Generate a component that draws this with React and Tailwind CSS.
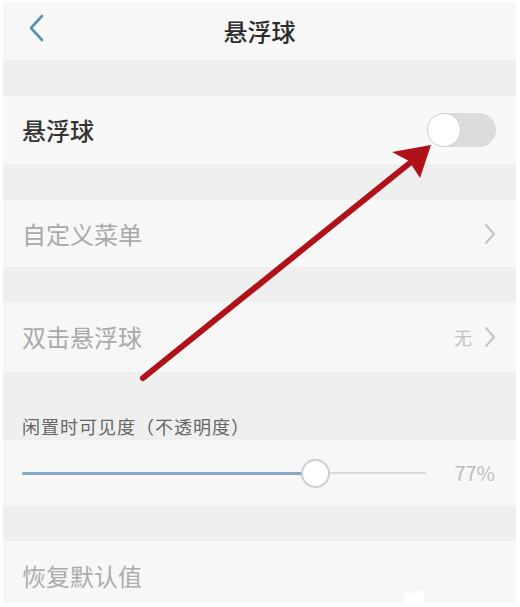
import React from "react";

const font = { fontFamily: '"Noto Sans CJK SC", "Noto Sans", sans-serif' };

function Chevron({ className }) {
  return (
    <svg className={className} width="12" height="22" viewBox="0 0 12 22" fill="none">
      <path d="M2 2 L10 11 L2 20" stroke="#c4c4c4" strokeWidth="2" strokeLinecap="round" strokeLinejoin="round" />
    </svg>
  );
}

export default function App() {
  return (
    <div
      className="relative w-[520px] h-[607px] bg-white pt-[2px] pl-[3px] pr-[4px] overflow-hidden font-['Noto_Sans_CJK_SC',sans-serif]"
      style={font}
    >
      <div className="flex flex-col h-[601px] bg-[#efefef]">
        {/* Header */}
        <div className="relative h-[58px] bg-[#f7f7f7] flex items-center justify-center shrink-0">
          <svg className="absolute left-[23px] top-[11px]" width="20" height="30" viewBox="0 0 20 30" fill="none">
            <path d="M16 3 L5 15 L16 27" stroke="#5f93ab" strokeWidth="2.6" strokeLinecap="round" strokeLinejoin="round" />
          </svg>
          <span className="text-[24px] font-medium text-[#2b2b2b] leading-none">悬浮球</span>
        </div>
        <div className="h-[36px] shrink-0" />
        {/* Row 1 */}
        <div className="h-[68px] bg-[#f8f8f8] flex items-center justify-between pl-[19px] pr-[20px] shrink-0">
          <span className="text-[24px] font-medium text-[#333333] leading-none">悬浮球</span>
          <div className="relative w-[69px] h-[34px] rounded-full bg-[#dcdcdc]">
            <div className="absolute left-0 top-0 w-[34px] h-[34px] rounded-full bg-white border border-[#d2d2d2]" />
          </div>
        </div>
        <div className="h-[36px] shrink-0" />
        {/* Row 2 */}
        <div className="h-[67px] bg-[#f7f7f7] flex items-center justify-between pl-[19px] pr-[20px] shrink-0">
          <span className="text-[24px] text-[#a9a9a9] leading-none">自定义菜单</span>
          <Chevron />
        </div>
        <div className="h-[35px] shrink-0" />
        {/* Row 3 */}
        <div className="h-[70px] bg-[#f7f7f7] flex items-center justify-between pl-[19px] pr-[20px] shrink-0">
          <span className="text-[24px] text-[#a9a9a9] leading-none">双击悬浮球</span>
          <div className="flex items-center gap-[12px]">
            <span className="text-[18px] text-[#c2c2c2] leading-none">无</span>
            <Chevron />
          </div>
        </div>
        {/* Section header */}
        <div className="h-[68px] flex items-end pl-[19px] pb-[5px] shrink-0">
          <span className="text-[18px] text-[#666666] leading-none tracking-[1px]">闲置时可见度（不透明度）</span>
        </div>
        {/* Slider row */}
        <div className="h-[66px] bg-[#f7f7f7] flex items-center pl-[19px] pr-[21px] shrink-0">
          <div className="relative w-[404px] h-[30px] flex items-center">
            <div className="absolute left-0 w-[280px] h-[3px] bg-[#86a8c6] rounded-full" />
            <div className="absolute left-[280px] right-0 h-[2px] bg-[#dadada]" />
            <div className="absolute left-[279px] w-[29px] h-[29px] rounded-full bg-white border-2 border-[#cfcfcf]" />
          </div>
          <span className="ml-auto text-[20px] text-[#bdbdbd] leading-none">77%</span>
        </div>
        <div className="h-[35px] shrink-0" />
        {/* Row 4 */}
        <div className="flex-1 bg-[#f7f7f7] flex items-center pl-[19px] pt-[8px]">
          <span className="text-[24px] text-[#acacac] leading-none">恢复默认值</span>
        </div>
      </div>

      {/* small white blob at bottom */}
      <div className="absolute left-[404px] top-[592px] w-[10px] h-[14px] rounded-t-full bg-white" />
      <div className="absolute left-[414px] top-[590px] w-[10px] h-[16px] rounded-t-full bg-white" />

      {/* Red arrow annotation */}
      <svg className="absolute left-0 top-0 pointer-events-none" width="520" height="607" viewBox="0 0 520 607">
        <line x1="143" y1="378" x2="416" y2="158" stroke="#b0121a" strokeWidth="6" strokeLinecap="round" />
        <polygon points="431,145 392,152 409,161 420,178" fill="#b0121a" />
      </svg>
    </div>
  );
}
